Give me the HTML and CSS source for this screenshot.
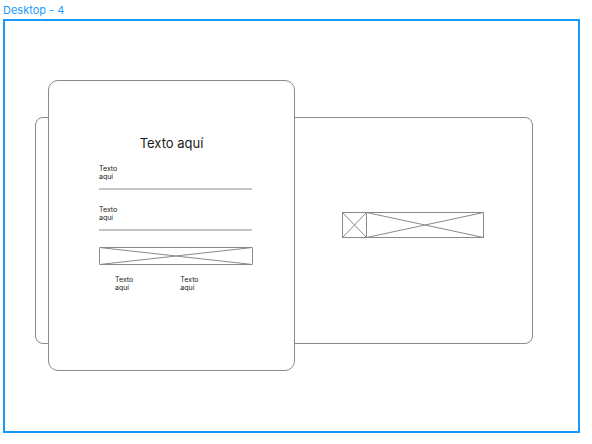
FILE: index.html
```html
<!DOCTYPE html>
<html lang="es">
<head>
  <meta charset="UTF-8">
  <meta name="viewport" content="width=device-width, initial-scale=1.0">
  <title>Desktop - 4</title>
  <link rel="stylesheet" href="styles.css">
</head>
<body>
  <div class="frame-label">Desktop - 4</div>
  <div class="frame">
    <!-- Tarjeta trasera -->
    <div class="back-card">
      <div class="media-row">
        <svg class="ph ph-square" viewBox="0 0 25 26" preserveAspectRatio="none">
          <rect x="0.5" y="0.5" width="24" height="25"/>
          <line x1="0.5" y1="0.5" x2="24.5" y2="25.5"/>
          <line x1="24.5" y1="0.5" x2="0.5" y2="25.5"/>
        </svg>
        <svg class="ph ph-wide" viewBox="0 0 118 26" preserveAspectRatio="none">
          <rect x="0.5" y="0.5" width="117" height="25"/>
          <line x1="0.5" y1="0.5" x2="117.5" y2="25.5"/>
          <line x1="117.5" y1="0.5" x2="0.5" y2="25.5"/>
        </svg>
      </div>
    </div>
    <!-- Tarjeta delantera -->
    <div class="front-card">
      <h1 class="title">Texto aquí</h1>
      <div class="field">
        <p class="small">Texto<br>aquí</p>
        <div class="field-line"></div>
      </div>
      <div class="field second">
        <p class="small">Texto<br>aquí</p>
        <div class="field-line"></div>
      </div>
      <svg class="ph ph-button" viewBox="0 0 154 18" preserveAspectRatio="none">
        <rect x="0.5" y="0.5" width="153" height="17" rx="1"/>
        <line x1="0.5" y1="0.5" x2="153.5" y2="17.5"/>
        <line x1="153.5" y1="0.5" x2="0.5" y2="17.5"/>
      </svg>
      <div class="links">
        <p class="small">Texto<br>aquí</p>
        <p class="small">Texto<br>aquí</p>
      </div>
    </div>
  </div>
</body>
</html>
```

FILE: styles.css
```css
:root {
  --frame: #1a9bfc;
  --stroke: #8a8a8a;
  --line: #c4c4c4;
  --text: #1a1a1a;
}
* { margin: 0; padding: 0; box-sizing: border-box; }
body {
  font-family: Inter, "Noto Sans", sans-serif;
  background: #ffffff;
  color: var(--text);
  width: 592px;
  height: 444px;
  overflow: hidden;
}
.frame-label {
  color: var(--frame);
  font-size: 11px;
  line-height: 14px;
  padding: 3px 0 0 3px;
  height: 19px;
}
.frame {
  position: relative;
  margin-left: 3px;
  width: 577px;
  height: 414px;
  border: 2px solid var(--frame);
}
.back-card {
  margin: 96px 0 0 30px;
  width: 498px;
  height: 227px;
  border: 1px solid var(--stroke);
  border-radius: 8px;
  padding: 94px 0 0 306px;
}
.media-row { display: flex; }
.ph { display: block; fill: none; stroke: var(--stroke); stroke-width: 1; }
.ph-square { width: 25px; height: 26px; }
.ph-wide { width: 118px; height: 26px; margin-left: -1px; }
.front-card {
  position: absolute;
  left: 43px;
  top: 59px;
  width: 247px;
  height: 291px;
  background: #ffffff;
  border: 1px solid var(--stroke);
  border-radius: 10px;
  padding: 54px 0 0 50px;
}
.title {
  font-size: 13px;
  font-weight: 400;
  line-height: 16px;
  text-align: center;
  margin-left: -50px;
}
.small {
  font-size: 7px;
  line-height: 8px;
}
.field { margin-top: 14px; width: 153px; }
.field.second { margin-top: 16px; }
.field-line {
  margin-top: 7px;
  height: 2px;
  background: var(--line);
}
.ph-button { width: 154px; height: 18px; margin-top: 16px; }
.links {
  display: flex;
  gap: 47px;
  margin: 11px 0 0 16px;
}
```
